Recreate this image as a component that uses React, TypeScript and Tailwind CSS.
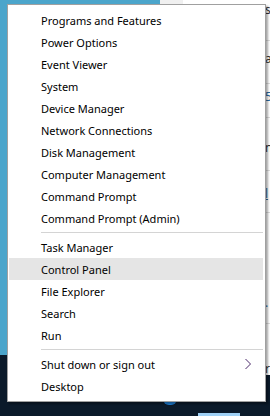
import { Fragment } from "react";

type Item = { label: string; active?: boolean; submenu?: boolean };

const groups: Item[][] = [
  [
    { label: "Programs and Features" },
    { label: "Power Options" },
    { label: "Event Viewer" },
    { label: "System" },
    { label: "Device Manager" },
    { label: "Network Connections" },
    { label: "Disk Management" },
    { label: "Computer Management" },
    { label: "Command Prompt" },
    { label: "Command Prompt (Admin)" },
  ],
  [
    { label: "Task Manager" },
    { label: "Control Panel", active: true },
    { label: "File Explorer" },
    { label: "Search" },
    { label: "Run" },
  ],
  [{ label: "Shut down or sign out", submenu: true }, { label: "Desktop" }],
];

export default function App() {
  return (
    <div
      className="relative h-[416px] w-[270px] overflow-hidden"
      style={{ fontFamily: '"Noto Sans", "Segoe UI", sans-serif' }}
    >
      {/* Desktop behind the menu */}
      <div className="flex h-full w-full">
        <div className="flex w-[265px] flex-col">
          <div className="flex h-[355px]">
            <div className="w-[160px] bg-[#4ba5cb]" />
            <div className="w-[23px] bg-[#f0f0f0]" />
            <div className="flex-1 bg-white" />
          </div>
          <div className="relative flex-1 bg-[#0b1a2a]">
            <div className="absolute left-[163px] top-[44px] h-[6px] w-[14px] rounded-b-full bg-[#1e7fd6]" />
            <div className="absolute left-[210px] top-[44px] h-[3px] w-[16px] bg-[#c8a040]" />
            <div className="absolute bottom-0 left-[198px] h-[3px] w-[42px] bg-[#9fd0f5]" />
          </div>
        </div>
        <div className="flex w-[5px] flex-col overflow-hidden text-[12px] leading-none text-[#333]">
          <div className="flex h-[375px] flex-col bg-white">
            <span className="mt-[4px]">s</span>
            <div className="mt-[24px] h-px bg-[#ddd]" />
            <span className="mt-[12px]">a</span>
            <div className="mt-[18px] h-px bg-[#ddd]" />
            <span className="mt-[8px] text-[#2a6aa0]">5</span>
            <div className="mt-[14px] h-px bg-[#ddd]" />
            <span className="mt-[24px]">n</span>
            <div className="mt-[16px] h-px bg-[#ddd]" />
            <span className="mt-[18px] text-[#2a6aa0] underline">l</span>
            <div className="mt-[12px] h-px bg-[#ddd]" />
            <span className="mt-[84px] text-[#2a6aa0]">.</span>
            <div className="mt-[14px] h-px bg-[#ddd]" />
            <span className="mt-[40px]">r</span>
          </div>
          <div className="flex-1 bg-[#0b1a2a]" />
        </div>
      </div>

      {/* Context menu */}
      <div className="absolute left-[7px] top-[4px] w-[259px] border border-[#a0a0a0] bg-white py-[4px] pl-[1px] pr-[2px] text-[11px] text-black shadow-[2px_2px_2px_rgba(0,0,0,0.35)]">
        {groups.map((group, gi) => (
          <Fragment key={gi}>
            {gi > 0 && (
              <div className="flex h-[7px] items-center pl-[32px]">
                <div className="h-px w-full bg-[#d4d4d4]" />
              </div>
            )}
            {group.map((item) => (
              <div
                key={item.label}
                className={`flex h-[22px] items-center justify-between pl-[32px] pr-[10px] ${
                  item.active ? "bg-[#e5e5e5]" : ""
                }`}
              >
                <span className="leading-none">{item.label}</span>
                {item.submenu && (
                  <svg width="8" height="12" viewBox="0 0 8 12" className="mr-[1px]">
                    <path d="M1.5 1 L6.5 6 L1.5 11" fill="none" stroke="#4b2a6b" strokeWidth="1" />
                  </svg>
                )}
              </div>
            ))}
          </Fragment>
        ))}
      </div>
    </div>
  );
}
